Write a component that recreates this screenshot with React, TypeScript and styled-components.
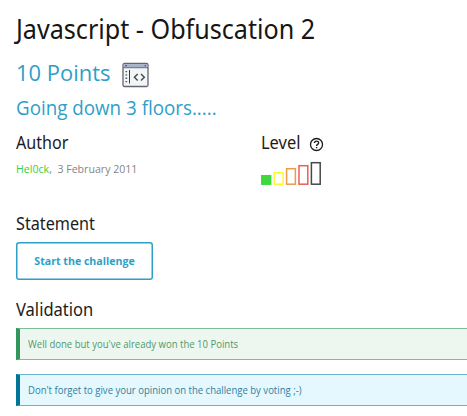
import React from "react";
import styled, { createGlobalStyle } from "styled-components";

const GlobalStyle = createGlobalStyle`
  body {
    margin: 0;
    background: #fff;
    overflow: hidden;
    font-family: "Open Sans", "Noto Sans", sans-serif;
  }
`;

const Page = styled.main`
  box-sizing: border-box;
  width: 467px;
  height: 416px;
  padding: 9px 0 0 16px;
  overflow: hidden;
`;

const Fit = styled.span<{ $scale: number }>`
  display: inline-block;
  white-space: nowrap;
  transform: scaleX(${(p) => p.$scale});
  transform-origin: left center;
`;

const Title = styled.h1`
  margin: 0;
  height: 41px;
  font: 400 27.5px/40px "Noto Sans", sans-serif;
  color: #161616;
`;

const Points = styled.div`
  display: flex;
  height: 46px;
  font-size: 22.5px;
  line-height: 46px;
  color: #2e9fc8;
`;

const PointsValue = styled.span`
  width: 106px;
`;

const Subtitle = styled.p`
  margin: 0;
  height: 26px;
  font-size: 19.5px;
  line-height: 24px;
  color: #2e9fc8;
`;

const Details = styled.section`
  box-sizing: border-box;
  display: grid;
  grid-template-columns: 245px 1fr;
  height: 89px;
  padding-top: 8px;
`;

const Heading = styled.h2`
  display: flex;
  align-items: center;
  margin: 0;
  height: 24px;
  font: 400 17.5px/24px "Noto Sans", sans-serif;
  color: #1c1c1c;
`;

const LevelLabel = styled.span`
  width: 48px;
`;

const Byline = styled.p`
  margin: 7px 0 0;
  font-size: 10.6px;
  line-height: 16px;
  color: #858585;
  white-space: pre;
`;

const AuthorName = styled.span`
  color: #3bcf3b;
`;

const StartButton = styled.button`
  display: block;
  box-sizing: border-box;
  width: 137px;
  height: 38px;
  margin: 7px 0 17px;
  padding: 0;
  border: 0;
  border-radius: 3px;
  box-shadow: inset 0 0 0 1.5px #2e9fc8;
  background: #fff;
  color: #2e9fc8;
  font: 700 10.6px/38px "Open Sans", sans-serif;
`;

const Alerts = styled.div`
  display: grid;
  gap: 14px;
  margin-top: 7px;
`;

const Alert = styled.div<{ $accent: string; $line: string; $fill: string; $ink: string }>`
  box-sizing: border-box;
  height: 32px;
  padding-left: 8px;
  border: solid ${(p) => p.$line};
  border-width: 1px 0 1px 4px;
  border-left-color: ${(p) => p.$accent};
  background: ${(p) => p.$fill};
  color: ${(p) => p.$ink};
  font-size: 10px;
  line-height: 31px;
  white-space: nowrap;
`;

const CodeWindow = styled.svg`
  display: block;
  margin-top: 12px;
`;

const CodeWindowIcon = () => (
  <CodeWindow width="27" height="26" viewBox="0 0 27 26" fill="none">
    <rect x="1" y="1.5" width="25" height="23" rx="1.5" fill="#f3f6f6" stroke="#626671" strokeWidth="1.3" />
    <path d="M1.7 2.2h23.6V5H1.7z" fill="#a5b1c8" />
    <path d="M1 5.7h25" stroke="#626671" strokeWidth="1" />
    <path d="M3 3.6h2M22.5 3.6H24" stroke="#59606d" strokeWidth="1.2" />
    <path d="M7.5 8v13.5" stroke="#343840" strokeWidth="1" />
    <path d="M4.3 9v13" stroke="#555960" strokeWidth="1.7" strokeDasharray="1.3 2" />
    <path d="m15.7 12-3.3 3.2 3.3 3.2M19 12l3.3 3.2-3.3 3.2" stroke="#43474f" strokeWidth="1.4" />
  </CodeWindow>
);

const HelpIcon = () => (
  <svg width="15" height="15" viewBox="0 0 15 15" fill="none" stroke="#1b1b1b">
    <circle cx="7.5" cy="7.5" r="6" strokeWidth="1.3" />
    <path d="M5.5 6.1c0-2.7 4.1-2.6 4.1-.2 0 1.5-2 1.5-2 3M7.6 10v1.3" strokeWidth="1.4" />
  </svg>
);

const HelpSlot = styled.span`
  display: flex;
  padding-top: 5px;
`;

const levels = [
  { height: 10, color: "#3cda3c", filled: true },
  { height: 13, color: "#fafa35" },
  { height: 17, color: "#ee9a4a" },
  { height: 20, color: "#e76152" },
  { height: 23, color: "#45484d" },
];

const LevelChart = styled.svg`
  display: block;
  margin-top: 7px;
`;

const LevelBars = () => (
  <LevelChart width="64" height="24" viewBox="0 0 64 24">
    {levels.map((l, i) => (
      <rect
        key={l.color}
        x={0.8 + i * 12.4}
        y={23.2 - (l.height - 1.5)}
        width="8.8"
        height={l.height - 1.5}
        fill={l.filled ? l.color : "#fff"}
        stroke={l.color}
        strokeWidth="1.5"
      />
    ))}
  </LevelChart>
);

export default function App() {
  return (
    <Page>
      <GlobalStyle />
      <Title><Fit $scale={0.914}>Javascript - Obfuscation 2</Fit></Title>
      <Points>
        <PointsValue><Fit $scale={0.975}>10 Points</Fit></PointsValue>
        <CodeWindowIcon />
      </Points>
      <Subtitle><Fit $scale={0.963}>Going down 3 floors.....</Fit></Subtitle>
      <Details>
        <div>
          <Heading><Fit $scale={0.92}>Author</Fit></Heading>
          <Byline><AuthorName>Hel0ck</AuthorName>,  3 February 2011</Byline>
        </div>
        <div>
          <Heading>
            <LevelLabel><Fit $scale={0.94}>Level</Fit></LevelLabel>
            <HelpSlot><HelpIcon /></HelpSlot>
          </Heading>
          <LevelBars />
        </div>
      </Details>
      <Heading><Fit $scale={0.925}>Statement</Fit></Heading>
      <StartButton>Start the challenge</StartButton>
      <Heading><Fit $scale={0.945}>Validation</Fit></Heading>
      <Alerts>
        <Alert $accent="#32965c" $line="#7fbd98" $fill="#edf7f0" $ink="#51986c">
          <Fit $scale={0.953}>Well done but you've already won the 10 Points</Fit>
        </Alert>
        <Alert $accent="#007499" $line="#69b3cc" $fill="#e4f8fe" $ink="#327f9e">
          <Fit $scale={0.953}>Don't forget to give your opinion on the challenge by voting ;-)</Fit>
        </Alert>
      </Alerts>
    </Page>
  );
}
